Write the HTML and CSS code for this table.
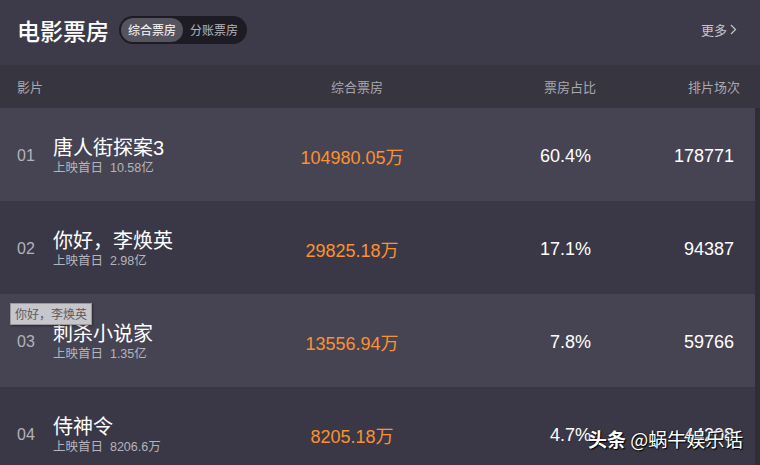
FILE: index.html
```html
<!DOCTYPE html>
<html lang="zh">
<head>
<meta charset="utf-8">
<link rel="stylesheet" href="styles.css">
</head>
<body>
<div class="page">
  <header class="top">
    <h1 class="title">电影票房</h1>
    <div class="toggle">
      <span class="tab active">综合票房</span>
      <span class="tab">分账票房</span>
    </div>
    <a class="more">更多<svg width="7" height="11" viewBox="0 0 7 11"><path d="M1 1l4.5 4.5L1 10" fill="none" stroke="#c6c5cc" stroke-width="1.2"/></svg></a>
  </header>

  <div class="thead">
    <span class="h-film">影片</span>
    <span class="h-box">综合票房</span>
    <span class="h-ratio">票房占比</span>
    <span class="h-shows">排片场次</span>
  </div>

  <div class="body">
    <div class="rows">
      <div class="row light">
        <div class="film"><span class="rank">01</span><div class="name"><div class="nm">唐人街探案3</div><div class="sub">上映首日&nbsp; 10.58亿</div></div></div>
        <div class="box">104980.05万</div>
        <div class="ratio">60.4%</div>
        <div class="shows">178771</div>
      </div>
      <div class="row dark">
        <div class="film"><span class="rank">02</span><div class="name"><div class="nm">你好，李焕英</div><div class="sub">上映首日&nbsp; 2.98亿</div></div></div>
        <div class="box">29825.18万</div>
        <div class="ratio">17.1%</div>
        <div class="shows">94387</div>
      </div>
      <div class="row light">
        <div class="film"><span class="rank">03</span><div class="name"><div class="nm">刺杀小说家</div><div class="sub">上映首日&nbsp; 1.35亿</div></div></div>
        <div class="box">13556.94万</div>
        <div class="ratio">7.8%</div>
        <div class="shows">59766</div>
      </div>
      <div class="row dark">
        <div class="film"><span class="rank">04</span><div class="name"><div class="nm">侍神令</div><div class="sub">上映首日&nbsp; 8206.6万</div></div></div>
        <div class="box">8205.18万</div>
        <div class="ratio">4.7%</div>
        <div class="shows">44208</div>
      </div>
    </div>
    <div class="scrollbar"></div>
  </div>

  <div class="tooltip">你好，李焕英</div>
  <div class="watermark"><b>头条</b> @蜗牛娱乐话</div>
</div>
</body>
</html>
```

FILE: styles.css
```css
html, body {
  margin: 0;
  padding: 0;
  background: #3d3b4a;
}
body {
  width: 760px;
  height: 465px;
  overflow: hidden;
  font-family: "Liberation Sans", "Noto Sans CJK SC", sans-serif;
}
.page {
  position: relative;
  width: 760px;
  height: 465px;
  overflow: hidden;
}
.top {
  height: 65px;
  box-sizing: border-box;
  padding: 0 23px 6px 17px;
  display: flex;
  align-items: center;
  background: #3d3b4a;
}
.title {
  margin: 0 10px 0 0;
  font-size: 23px;
  line-height: 28px;
  font-weight: 500;
  color: #ffffff;
  font-family: "Noto Sans CJK SC", sans-serif;
}
.toggle {
  display: flex;
  height: 28px;
  box-sizing: border-box;
  padding: 2px;
  border-radius: 14px;
  background: #1d1c24;
}
.tab {
  width: 62px;
  height: 24px;
  line-height: 24px;
  text-align: center;
  font-size: 12px;
  color: #b4b3bb;
  border-radius: 12px;
  font-family: "Noto Sans CJK SC", sans-serif;
}
.tab.active {
  background: #56545f;
  color: #ffffff;
}
.more {
  margin-left: auto;
  display: flex;
  align-items: center;
  gap: 3px;
  font-size: 13px;
  color: #c6c5cc;
  font-family: "Noto Sans CJK SC", sans-serif;
}
.thead {
  height: 43px;
  display: grid;
  grid-template-columns: 238px 204px 137px 144px;
  padding: 0 20px 0 17px;
  align-items: center;
  background: #37353f;
  font-size: 13px;
  color: #a9a8b1;
  font-family: "Noto Sans CJK SC", sans-serif;
}
.h-box { text-align: center; }
.h-ratio, .h-shows { text-align: right; }
.body {
  display: flex;
}
.rows {
  width: 755px;
}
.scrollbar {
  width: 5px;
  background: #2f2e37;
}
.row {
  height: 93px;
  box-sizing: border-box;
  padding: 3px 21px 0 17px;
  display: grid;
  grid-template-columns: 233px 204px 137px 143px;
  align-items: center;
}
.row.light { background: #464453; }
.row.dark { background: #3a3846; }
.film {
  display: flex;
  align-items: center;
}
.rank {
  width: 36px;
  font-size: 16px;
  color: #b3b2bb;
}
.nm {
  font-size: 20px;
  line-height: 24px;
  color: #ffffff;
}
.sub {
  font-size: 12.5px;
  line-height: 16px;
  color: #b5b4bd;
}
.box {
  text-align: center;
  font-size: 18px;
  color: #fb9130;
}
.ratio, .shows {
  text-align: right;
  font-size: 18px;
  color: #ffffff;
}
.tooltip {
  position: absolute;
  left: 10px;
  top: 303px;
  height: 20px;
  line-height: 20px;
  padding: 0 4px;
  background: #c7c6cb;
  border: 1px solid #9a99a0;
  color: #5a5960;
  font-size: 12px;
  box-shadow: 1px 1px 2px rgba(0,0,0,0.4);
  font-family: "Noto Sans CJK SC", sans-serif;
}
.watermark {
  position: absolute;
  left: 588px;
  top: 425px;
  font-size: 19px;
  line-height: 28px;
  color: #ffffff;
  text-shadow: 1px 1px 1px #000, 0 0 2px rgba(0,0,0,0.8);
  font-family: "Noto Sans CJK SC", sans-serif;
  white-space: nowrap;
}
.watermark b { font-weight: bold; }
```
